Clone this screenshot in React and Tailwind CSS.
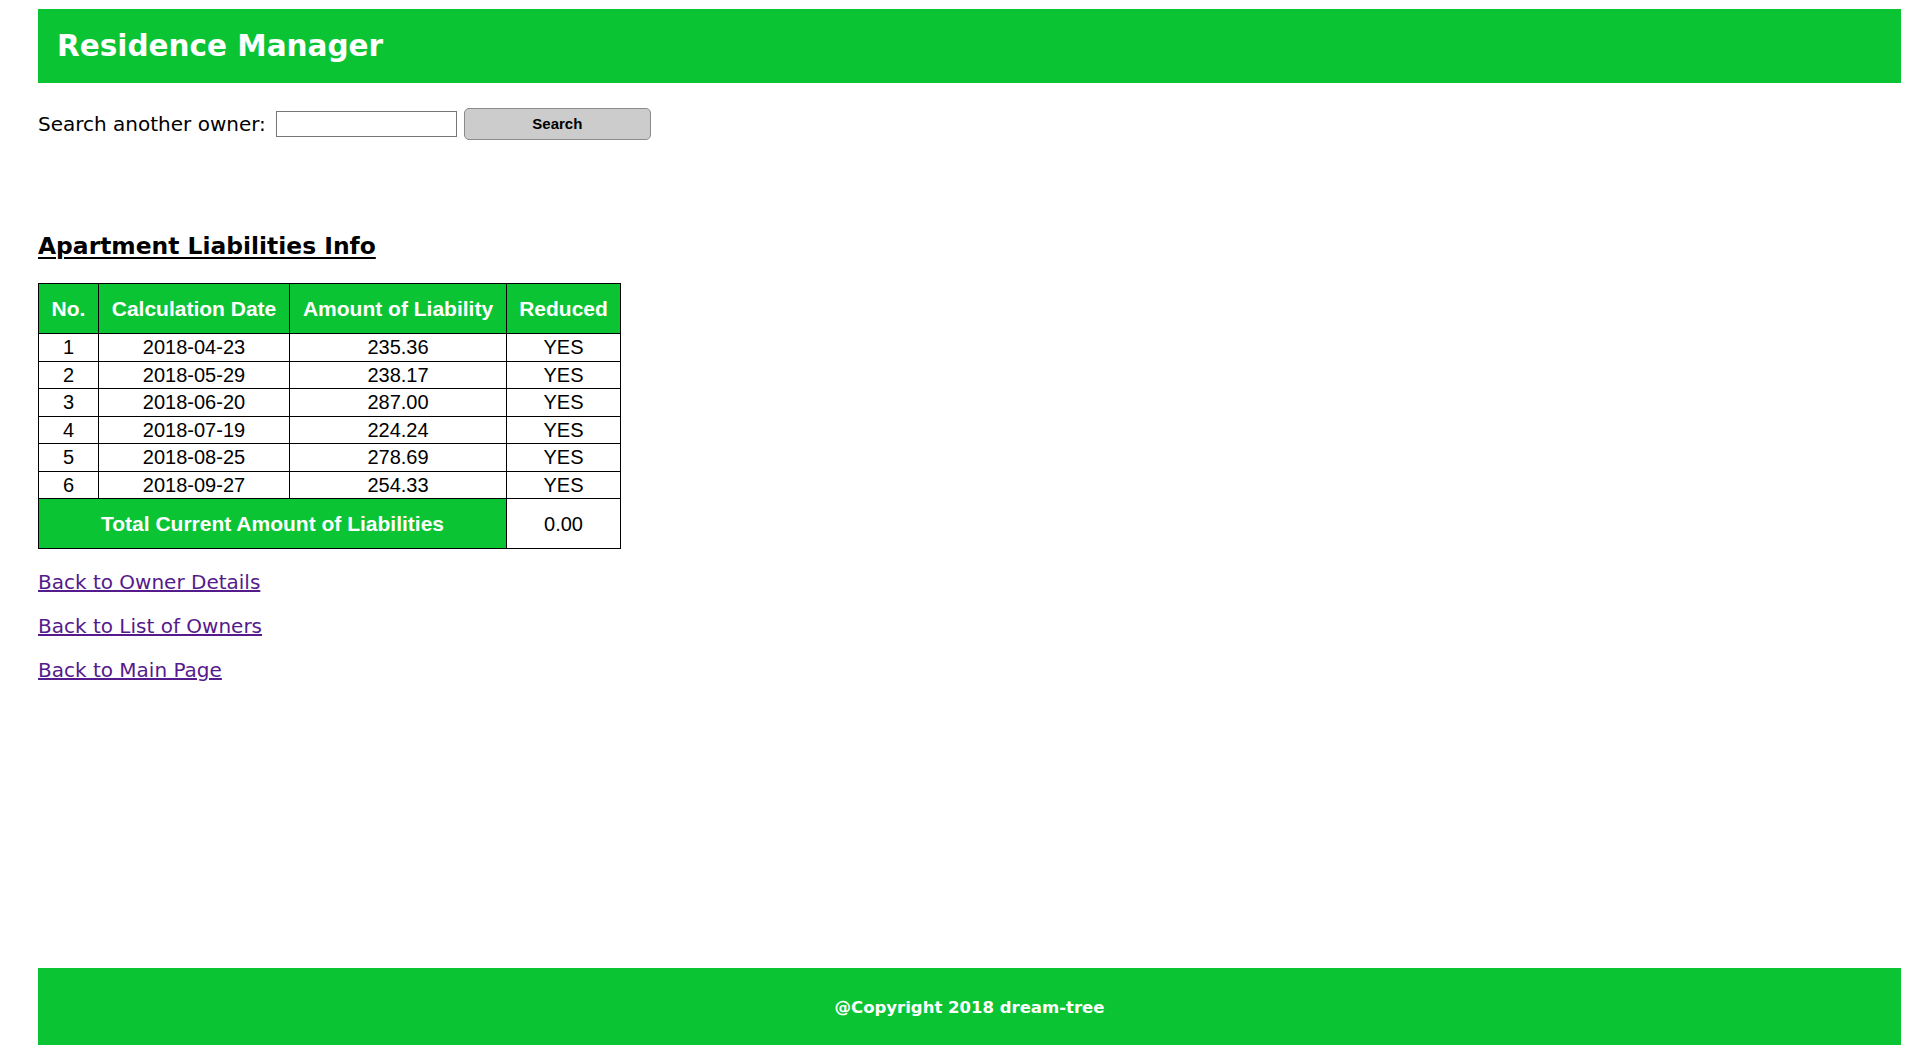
import React from 'react'

const rows = [
  { no: 1, date: '2018-04-23', amount: '235.36', reduced: 'YES' },
  { no: 2, date: '2018-05-29', amount: '238.17', reduced: 'YES' },
  { no: 3, date: '2018-06-20', amount: '287.00', reduced: 'YES' },
  { no: 4, date: '2018-07-19', amount: '224.24', reduced: 'YES' },
  { no: 5, date: '2018-08-25', amount: '278.69', reduced: 'YES' },
  { no: 6, date: '2018-09-27', amount: '254.33', reduced: 'YES' },
]

const verdana = "font-['DejaVu_Sans',Verdana,sans-serif]"
const tahoma = "font-['Liberation_Sans',Tahoma,Arial,sans-serif]"

export default function App() {
  return (
    <div className={`min-h-[1054px] flex flex-col pl-[38px] pr-[19px] bg-white text-black ${verdana}`}>
      {/* Header */}
      <header className="mt-[9px] h-[74px] bg-[#0bc434] flex items-center pl-[19px] pt-[2px]">
        <h1 className="text-[29.5px] font-bold text-white leading-none">Residence Manager</h1>
      </header>

      {/* Search */}
      <div className="mt-[25px] flex items-center h-[32px]">
        <span className="text-[20px] leading-6">Search another owner:</span>
        <input
          type="text"
          className="ml-[10px] w-[181px] h-[26px] border border-[#767676] bg-white px-1 text-[14px] outline-none"
        />
        <button className={`ml-[7px] w-[187px] h-[32px] rounded-[5px] border border-[#8a8a8a] bg-[#cccccc] text-[15px] font-bold ${tahoma}`}>
          Search
        </button>
      </div>

      {/* Liabilities */}
      <h2 className="mt-[92px] text-[23.4px] leading-[28px] font-bold underline underline-offset-[3px] decoration-[2px]">
        Apartment Liabilities Info
      </h2>

      <table className={`mt-[23px] w-[582px] table-fixed border-collapse border border-black text-[20px] ${tahoma}`}>
        <thead>
          <tr className="h-[50px] bg-[#0bc434] text-white text-[21px]">
            <th className="w-[60px] border border-black font-bold">No.</th>
            <th className="w-[191px] border border-black font-bold">Calculation Date</th>
            <th className="w-[217px] border border-black font-bold">Amount of Liability</th>
            <th className="w-[114px] border border-black font-bold">Reduced</th>
          </tr>
        </thead>
        <tbody>
          {rows.map((r) => (
            <tr key={r.no} className="h-[27.5px] text-center leading-6">
              <td className="border border-black p-0">{r.no}</td>
              <td className="border border-black p-0">{r.date}</td>
              <td className="border border-black p-0">{r.amount}</td>
              <td className="border border-black p-0">{r.reduced}</td>
            </tr>
          ))}
          <tr className="h-[50px] text-center">
            <td colSpan={3} className="border border-black bg-[#0bc434] text-white text-[21px] font-bold">
              Total Current Amount of Liabilities
            </td>
            <td className="border border-black">0.00</td>
          </tr>
        </tbody>
      </table>

      {/* Links */}
      <div className="mt-[21px] flex flex-col gap-[20px] text-[20px] leading-6">
        <a href="#" className="self-start text-[#551a8b] underline">Back to Owner Details</a>
        <a href="#" className="self-start text-[#551a8b] underline">Back to List of Owners</a>
        <a href="#" className="self-start text-[#551a8b] underline">Back to Main Page</a>
      </div>

      {/* Footer */}
      <footer className="mt-auto mb-[9px] h-[77px] bg-[#0bc434] flex items-center justify-center pt-[3px]">
        <p className="text-[16.5px] font-bold text-white">@Copyright 2018 dream-tree</p>
      </footer>
    </div>
  )
}
